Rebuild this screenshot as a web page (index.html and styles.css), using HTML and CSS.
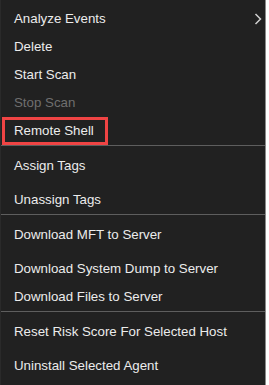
FILE: index.html
```html
<!DOCTYPE html>
<html>
<head>
<meta charset="utf-8">
<link rel="stylesheet" href="styles.css">
</head>
<body>
<div class="menu">
  <div class="group g1">
    <div class="item"><span>Analyze Events</span>
      <svg class="chev" width="8" height="12" viewBox="0 0 8 12"><polyline points="1.5,1 6.5,6 1.5,11" fill="none" stroke="#cfcfcf" stroke-width="1.5"/></svg>
    </div>
    <div class="item">Delete</div>
    <div class="item">Start Scan</div>
    <div class="item disabled">Stop Scan</div>
    <div class="item"><span class="hl">Remote Shell</span></div>
  </div>
  <div class="sep"></div>
  <div class="group g2">
    <div class="item">Assign Tags</div>
    <div class="item">Unassign Tags</div>
  </div>
  <div class="sep"></div>
  <div class="group g3">
    <div class="item">Download MFT to Server</div>
    <div class="item gap">Download System Dump to Server</div>
    <div class="item">Download Files to Server</div>
  </div>
  <div class="sep"></div>
  <div class="group g4">
    <div class="item">Reset Risk Score For Selected Host</div>
    <div class="item">Uninstall Selected Agent</div>
  </div>
</div>
</body>
</html>
```

FILE: styles.css
```css
html, body {
  margin: 0;
  padding: 0;
  background: #ffffff;
}
.menu {
  width: 266px;
  height: 385px;
  box-sizing: border-box;
  background: #212121;
  border-right: 1px solid #8a8a8a;
  border-left: 1px solid #2a2a2a;
  font-family: "Liberation Sans", Arial, sans-serif;
  font-size: 13.3px;
  color: #ececec;
  overflow: hidden;
}
.group {
  display: flex;
  flex-direction: column;
}
.g1 { padding-top: 5px; }
.g2 { padding-top: 6px; gap: 6px; }
.g3 { padding-top: 6px; }
.g4 { padding-top: 6px; gap: 6px; }
.item {
  height: 28px;
  line-height: 28px;
  padding-left: 13px;
  padding-right: 3px;
  display: flex;
  align-items: center;
  white-space: nowrap;
}
.item.gap { margin-top: 6px; }
.item.disabled { color: #6f6f6f; }
.chev { margin-left: auto; }
.sep {
  height: 1px;
  background: #5e5e5e;
}
.hl {
  display: inline-block;
  box-sizing: border-box;
  height: 28px;
  line-height: 22px;
  border: 3px solid #f04444;
  margin-left: -12px;
  padding: 0 11px 0 9px;
}
```
